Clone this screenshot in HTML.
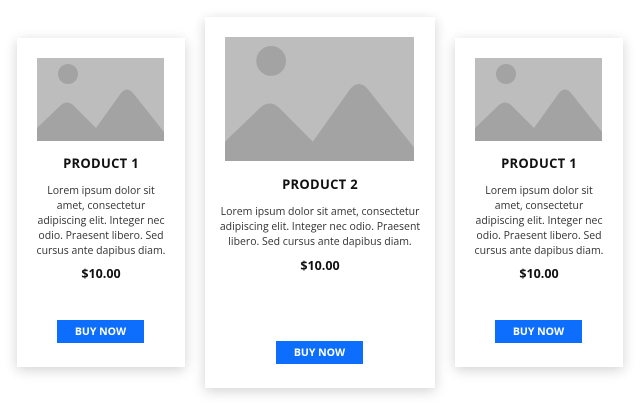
<!DOCTYPE html>
<html><head><style>
*{margin:0;padding:0;box-sizing:border-box}
body{width:640px;height:405px;background:#fff;position:relative;overflow:hidden;font-family:"Open Sans","Liberation Sans",sans-serif;color:#222}
.card{position:absolute;background:#fff;box-shadow:0 3px 12px rgba(0,0,0,0.18);text-align:center}
.img{position:absolute;background:#bdbdbd}
.img svg{display:block;width:100%;height:100%}
h3{position:absolute;left:0;right:0;font-size:13px;font-weight:bold;letter-spacing:0.3px;color:#111}
p{position:absolute;left:0;right:0;font-size:10.5px;line-height:15px;color:#333;white-space:nowrap}
.price{position:absolute;left:0;right:0;font-size:12.5px;font-weight:bold;color:#111}
.btn{position:absolute;background:#0d6efd;color:#fff;font-size:10.5px;font-weight:bold;line-height:25px;height:23px;width:87px}
</style></head><body>
<svg width="0" height="0" style="position:absolute"><defs>
<symbol id="pic" viewBox="0 0 127 83" preserveAspectRatio="none">
<rect width="127" height="83" fill="#bdbdbd"/>
<circle cx="31" cy="16" r="10" fill="#a3a3a3"/>
<path d="M0 70 L24 47 Q30 42 36 47 L59 70 L84 35 Q90 28 96 35 L127 74 L127 83 L0 83 Z" fill="#a3a3a3"/>
</symbol></defs></svg>

<div class="card" style="left:17px;top:38px;width:168px;height:329px">
<div class="img" style="left:20px;top:20px;width:127px;height:83px"><svg><use href="#pic"/></svg></div>
<h3 style="top:116px">PRODUCT 1</h3>
<p style="top:146px">Lorem ipsum dolor sit<br>amet, consectetur<br>adipiscing elit. Integer nec<br>odio. Praesent libero. Sed<br>cursus ante dapibus diam.</p>
<div class="price" style="top:227px">$10.00</div>
<div class="btn" style="left:40px;top:282px">BUY NOW</div>
</div>

<div class="card" style="left:205px;top:17px;width:230px;height:371px">
<div class="img" style="left:20px;top:20px;width:189px;height:124px"><svg><use href="#pic"/></svg></div>
<h3 style="top:158px">PRODUCT 2</h3>
<p style="top:188px">Lorem ipsum dolor sit amet, consectetur<br>adipiscing elit. Integer nec odio. Praesent<br>libero. Sed cursus ante dapibus diam.</p>
<div class="price" style="top:240px">$10.00</div>
<div class="btn" style="left:71px;top:324px">BUY NOW</div>
</div>

<div class="card" style="left:455px;top:38px;width:168px;height:329px">
<div class="img" style="left:20px;top:20px;width:127px;height:83px"><svg><use href="#pic"/></svg></div>
<h3 style="top:116px">PRODUCT 1</h3>
<p style="top:146px">Lorem ipsum dolor sit<br>amet, consectetur<br>adipiscing elit. Integer nec<br>odio. Praesent libero. Sed<br>cursus ante dapibus diam.</p>
<div class="price" style="top:227px">$10.00</div>
<div class="btn" style="left:40px;top:282px">BUY NOW</div>
</div>
</body></html>
